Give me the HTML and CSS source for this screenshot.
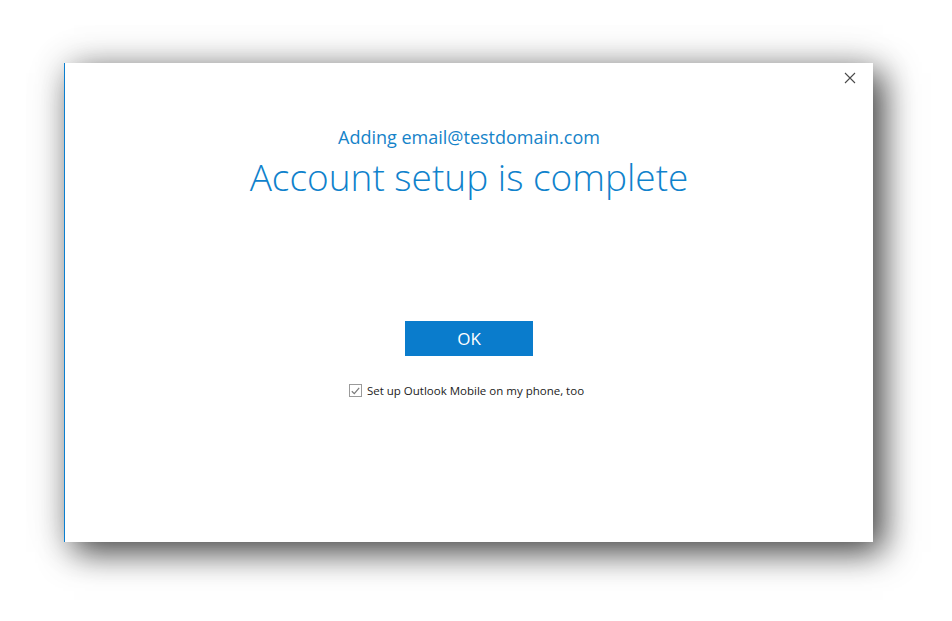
FILE: index.html
```html
<!DOCTYPE html>
<html>
<head>
<meta charset="utf-8">
<link rel="stylesheet" href="styles.css">
</head>
<body>
<div class="dialog">
  <button class="close" aria-label="Close">
    <svg width="12" height="12" viewBox="0 0 12 12"><path d="M1 1 L11 11 M11 1 L1 11" stroke="#4a4a4a" stroke-width="1.1" fill="none"/></svg>
  </button>
  <div class="content">
    <div class="subtitle">Adding email@testdomain.com</div>
    <h1 class="title">Account setup is complete</h1>
    <button class="ok">OK</button>
    <label class="check">
      <span class="box">
        <svg width="9" height="8" viewBox="0 0 9 8"><path d="M0.8 4.2 L3.3 6.6 L8.2 0.8" stroke="#7a7a7a" stroke-width="1.2" fill="none"/></svg>
      </span>
      <span class="check-text">Set up Outlook Mobile on my phone, too</span>
    </label>
  </div>
</div>
</body>
</html>
```
FILE: styles.css
```css
html, body {
  margin: 0;
  padding: 0;
  background: #ffffff;
  width: 952px;
  height: 621px;
  overflow: hidden;
}
body {
  padding: 63px 0 0 64px;
  box-sizing: border-box;
  font-family: "Open Sans", "Noto Sans", sans-serif;
}
.dialog {
  position: relative;
  width: 809px;
  height: 479px;
  box-sizing: border-box;
  background: #ffffff;
  border-left: 1px solid #0a7fd0;
  box-shadow: 10px 10px 32px rgba(0, 0, 0, 0.72), 0 0 40px rgba(0,0,0,0.12);
}
.close {
  position: absolute;
  top: 9px;
  right: 17px;
  width: 12px;
  height: 12px;
  padding: 0;
  border: 0;
  background: none;
  display: flex;
}
.content {
  display: flex;
  flex-direction: column;
  align-items: center;
  padding-top: 62px;
}
.subtitle {
  font-size: 18px;
  line-height: 24px;
  color: #1683c9;
}
.title {
  margin: 5px 0 0 0;
  font-weight: 300;
  font-size: 37px;
  line-height: 46px;
  color: #0f82cc;
}
.ok {
  margin-top: 121px;
  width: 128px;
  height: 35px;
  border: 0;
  background: #0a7ccc;
  color: #ffffff;
  font-family: "Open Sans", "Noto Sans", sans-serif;
  font-size: 17px;
  padding: 0;
}
.check {
  margin-top: 27px;
  margin-left: -5px;
  display: flex;
  align-items: center;
  gap: 5px;
  font-size: 11.5px;
  color: #222222;
}
.box {
  width: 11px;
  height: 11px;
  border: 1px solid #9a9a9a;
  display: flex;
  align-items: center;
  justify-content: center;
  background: #fff;
}
```
